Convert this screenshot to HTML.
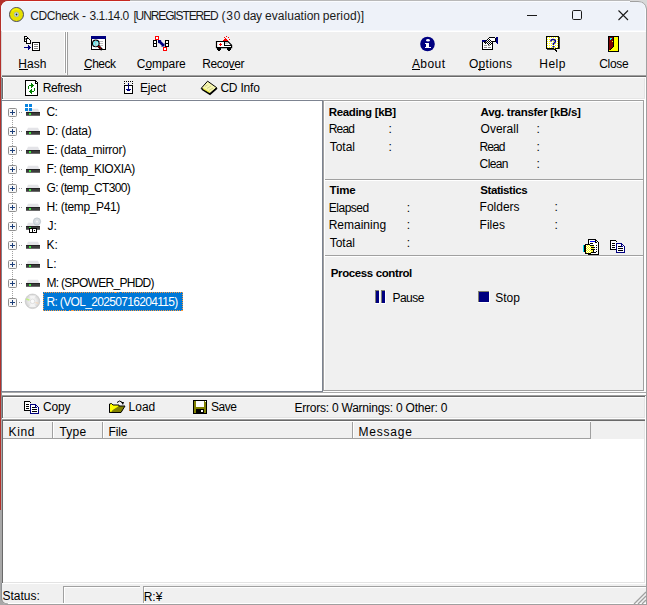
<!DOCTYPE html>
<html><head><meta charset="utf-8"><style>
html,body{margin:0;padding:0;}
body{width:647px;height:605px;overflow:hidden;background:#f0f0f0;}
#root{position:relative;width:647px;height:605px;overflow:hidden;}
#bg{position:absolute;left:0;top:0;}
#ic{position:absolute;left:0;top:0;z-index:3;}
.t{position:absolute;z-index:2;font-family:'Liberation Sans',sans-serif;font-size:12px;line-height:14px;white-space:nowrap;color:#000;}

</style></head><body>
<div id="root">
<svg id="bg" width="647" height="605" viewBox="0 0 647 605" shape-rendering="crispEdges">
<!-- outside background -->
<rect x="0" y="0" width="647" height="605" fill="#f0f0f0"/>
<rect x="0" y="0" width="130" height="12" fill="#c62820"/>
<rect x="0" y="0" width="12" height="510" fill="#b3302a"/><rect x="0" y="510" width="12" height="95" fill="#a8a8a8"/>
<rect x="130" y="0" width="517" height="1" fill="#b9b9b9"/>
<rect x="630" y="0" width="17" height="12" fill="#d8d8d8"/><rect x="130" y="0" width="500" height="1" fill="#b9b9b9"/>
<!-- window -->
<path shape-rendering="geometricPrecision" d="M1,9 Q1,1 9,1 L638,1 Q646,1 646,9 L646,606 L1,606 Z" fill="#f0f0f0" stroke="none"/>
<!-- title bar -->
<path shape-rendering="geometricPrecision" d="M1.5,9 Q1.5,1.5 9,1.5 L638,1.5 Q645.5,1.5 645.5,9 L645.5,31 L1.5,31 Z" fill="#eef2f9" stroke="#fafcff" stroke-width="1"/>
<rect x="1" y="9" width="1" height="597" fill="#8e9296"/>
<rect x="1" y="9" width="1" height="22" fill="#f4f6fa"/>
<rect x="1" y="31" width="1" height="46" fill="#d8d8d8"/>
<rect x="646" y="9" width="1" height="597" fill="#a0a0a0"/>
<path shape-rendering="geometricPrecision" d="M630,1.5 L638,1.5 Q645.5,1.5 646.5,9" stroke="#a0a0a0" stroke-width="1" fill="none"/>
<!-- toolbar 1 -->
<rect x="2" y="31" width="644" height="44" fill="#f0f0f0"/>
<rect x="2" y="30" width="644" height="1" fill="#f6f8fc"/>
<rect x="2" y="31" width="644" height="1" fill="#ffffff"/>
<rect x="64" y="32" width="1" height="41" fill="#ffffff"/>
<rect x="65" y="32" width="1" height="41" fill="#a0a0a0"/>
<rect x="66" y="32" width="1" height="43" fill="#ffffff"/>
<rect x="67" y="32" width="1" height="43" fill="#a0a0a0"/>
<rect x="2" y="75" width="644" height="1" fill="#a0a0a0"/>
<rect x="2" y="76" width="644" height="1" fill="#696969"/>
<rect x="2" y="77" width="644" height="1" fill="#ffffff"/>
<!-- toolbar 2 -->
<rect x="2" y="78" width="1" height="21" fill="#696969"/>
<rect x="3" y="78" width="1" height="20" fill="#ffffff"/>
<rect x="644" y="78" width="1" height="21" fill="#e3e3e3"/>
<rect x="645" y="77" width="1" height="22" fill="#ffffff"/>
<rect x="3" y="98" width="642" height="1" fill="#e6e6e6"/>
<rect x="2" y="99" width="644" height="1" fill="#ffffff"/>
<!-- tree -->
<rect x="1" y="100" width="322" height="292" fill="#7d8491"/>
<rect x="2" y="101" width="320" height="290" fill="#ffffff"/>
<!-- right panel (etched) -->
<rect x="323" y="100" width="322" height="292" fill="#ffffff"/>
<rect x="323" y="100" width="321" height="291" fill="#a0a0a0"/>
<rect x="324" y="101" width="319" height="289" fill="#ffffff"/>
<rect x="325" y="102" width="318" height="288" fill="#f0f0f0"/>
<rect x="644" y="100" width="2" height="292" fill="#ffffff"/>
<!-- group separators -->
<rect x="325" y="179" width="318" height="1" fill="#a0a0a0"/>
<rect x="325" y="180" width="318" height="1" fill="#ffffff"/>
<rect x="325" y="255" width="318" height="1" fill="#a0a0a0"/>
<rect x="325" y="256" width="318" height="1" fill="#ffffff"/>
<!-- splitter -->
<rect x="2" y="392" width="644" height="1" fill="#a8a8a8"/>
<rect x="2" y="393" width="644" height="2" fill="#ffffff"/>
<rect x="2" y="395" width="644" height="1" fill="#a0a0a0"/>
<rect x="2" y="396" width="643" height="1" fill="#696969"/>
<!-- bottom toolbar -->
<rect x="2" y="396" width="1" height="25" fill="#696969"/>
<rect x="3" y="397" width="642" height="1" fill="#ffffff"/>
<rect x="3" y="397" width="1" height="20" fill="#ffffff"/>
<rect x="644" y="397" width="1" height="21" fill="#e3e3e3"/>
<rect x="645" y="396" width="1" height="23" fill="#ffffff"/>
<rect x="3" y="417" width="642" height="1" fill="#e3e3e3"/>
<rect x="2" y="418" width="644" height="1" fill="#ffffff"/>
<rect x="2" y="419" width="644" height="1" fill="#a0a0a0"/>
<rect x="2" y="420" width="643" height="1" fill="#696969"/>
<!-- list view -->
<rect x="1" y="419" width="1" height="164" fill="#a8a8a8"/>
<rect x="2" y="420" width="1" height="163" fill="#696969"/>
<rect x="3" y="421" width="642" height="161" fill="#ffffff"/>
<rect x="644" y="421" width="1" height="162" fill="#e3e3e3"/>
<rect x="645" y="419" width="1" height="164" fill="#ffffff"/>
<rect x="3" y="421" width="641" height="18" fill="#f0f0f0"/>
<rect x="3" y="421" width="588" height="1" fill="#ffffff"/>
<rect x="3" y="438" width="588" height="1" fill="#a0a0a0"/>
<rect x="52" y="422" width="1" height="16" fill="#a0a0a0"/>
<rect x="53" y="422" width="1" height="16" fill="#ffffff"/>
<rect x="102" y="422" width="1" height="16" fill="#a0a0a0"/>
<rect x="103" y="422" width="1" height="16" fill="#ffffff"/>
<rect x="352" y="422" width="1" height="16" fill="#a0a0a0"/>
<rect x="353" y="422" width="1" height="16" fill="#ffffff"/>
<rect x="590" y="422" width="1" height="17" fill="#a0a0a0"/>
<rect x="3" y="582" width="642" height="1" fill="#e3e3e3"/>
<rect x="2" y="583" width="644" height="1" fill="#ffffff"/>
<!-- status bar -->
<rect x="63" y="586" width="77" height="1" fill="#a0a0a0"/>
<rect x="63" y="586" width="1" height="17" fill="#a0a0a0"/>
<rect x="64" y="587" width="76" height="1" fill="#ffffff"/>
<rect x="64" y="587" width="1" height="16" fill="#ffffff"/>
<rect x="143" y="586" width="503" height="1" fill="#a0a0a0"/>
<rect x="143" y="586" width="1" height="17" fill="#a0a0a0"/>
<rect x="144" y="587" width="502" height="1" fill="#ffffff"/>
<rect x="144" y="587" width="1" height="16" fill="#ffffff"/>
<rect x="2" y="603" width="644" height="1" fill="#ffffff"/>
<rect x="2" y="604" width="645" height="1" fill="#a0a0a0"/>
<!-- bottom-left corner -->
<path shape-rendering="geometricPrecision" d="M0,597 L1.5,597 Q1.5,604.5 8,604.5 L8,605 L0,605 Z" fill="#a8a8a8"/>
<path shape-rendering="geometricPrecision" d="M1.5,597 Q1.5,604 8,604" stroke="#909090" stroke-width="1" fill="none"/>
<!-- tree selection -->
<rect x="43" y="292" width="140" height="19" fill="#0078d7"/>
<rect x="43.5" y="292.5" width="139" height="18" fill="none" stroke="#ff9a3c" stroke-width="1" stroke-dasharray="1 1" shape-rendering="crispEdges"/>
<!-- accelerator underlines -->
<rect x="19" y="69" width="9" height="1" fill="#000"/>
<rect x="84" y="69" width="7" height="1" fill="#000"/>
<rect x="145" y="69" width="6" height="1" fill="#000"/>
<rect x="230" y="69" width="5" height="1" fill="#000"/>
<rect x="412" y="69" width="8" height="1" fill="#000"/>
<rect x="478" y="69" width="7" height="1" fill="#000"/>
</svg>

<svg id="ic" width="647" height="605" viewBox="0 0 647 605">
<defs>
<pattern id="ydots" x="0" y="0" width="2" height="2" patternUnits="userSpaceOnUse"><rect width="2" height="2" fill="#fff"/><rect x="1" y="1" width="1" height="1" fill="#ffff00"/></pattern>
<pattern id="ychk" x="0" y="0" width="2" height="2" patternUnits="userSpaceOnUse"><rect width="2" height="2" fill="#fff"/><rect x="0" y="0" width="1" height="1" fill="#ffff00"/><rect x="1" y="1" width="1" height="1" fill="#ffff00"/></pattern>
<pattern id="bwchk" x="0" y="0" width="2" height="2" patternUnits="userSpaceOnUse"><rect width="2" height="2" fill="#fff"/><rect x="0" y="0" width="1" height="1" fill="#000"/><rect x="1" y="1" width="1" height="1" fill="#000"/></pattern>
</defs>
<!-- app icon -->
<g>
<circle cx="16.5" cy="14.5" r="7" fill="#e6e000" stroke="#4a4a5a" stroke-width="1"/>
<path d="M12,11 A5.5,5.5 0 0 1 19,10" stroke="#f8f400" stroke-width="1.5" fill="none"/>
<circle cx="16.5" cy="14.5" r="2.3" fill="#c8dcea" stroke="#9ab" stroke-width="0.6"/>
<circle cx="16.5" cy="14.5" r="0.9" fill="#222"/>
</g>
<!-- caption buttons -->
<rect x="527" y="15" width="10" height="1" fill="#1a1a1a" shape-rendering="crispEdges"/>
<rect x="572.5" y="10.5" width="9" height="9" rx="1.2" fill="none" stroke="#1a1a1a" stroke-width="1"/>
<path d="M618.5,10.5 L628,20 M628,10.5 L618.5,20" stroke="#1a1a1a" stroke-width="1.1"/>

<g shape-rendering="crispEdges">
<!-- Hash icon -->
<rect x="24" y="36" width="5" height="6" fill="#000"/>
<rect x="25" y="37" width="2" height="4" fill="#fff"/>
<rect x="27" y="38" width="1" height="3" fill="#fff"/>
<rect x="27" y="36" width="2" height="1" fill="#f0f0f0"/><rect x="28" y="37" width="1" height="1" fill="#f0f0f0"/>
<rect x="26" y="38" width="5" height="6" fill="#000"/>
<rect x="27" y="39" width="2" height="4" fill="#fff"/>
<rect x="29" y="40" width="1" height="3" fill="#fff"/>
<rect x="29" y="38" width="2" height="1" fill="#f0f0f0"/><rect x="30" y="39" width="1" height="1" fill="#f0f0f0"/>
<rect x="25" y="38" width="1" height="2" fill="#808080"/>
<rect x="32" y="42" width="8" height="9" fill="#000"/><rect x="33" y="43" width="6" height="7" fill="#fff"/>
<rect x="34" y="44" width="4" height="1" fill="#808080"/><rect x="34" y="46" width="4" height="1" fill="#808080"/><rect x="34" y="48" width="4" height="1" fill="#808080"/>
<rect x="24" y="47" width="6" height="1" fill="#000080"/>
<rect x="28" y="45" width="1" height="5" fill="#000080"/><rect x="29" y="46" width="1" height="3" fill="#000080"/><rect x="30" y="47" width="1" height="1" fill="#000080"/>

<!-- Check icon -->
<rect x="91" y="36" width="15" height="14" fill="#000"/>
<rect x="91" y="36" width="15" height="3" fill="#000080"/>
<rect x="92" y="39" width="13" height="10" fill="#fff"/>
<rect x="99" y="41" width="4" height="1" fill="#c0c0c0"/><rect x="99" y="43" width="4" height="1" fill="#c0c0c0"/><rect x="99" y="45" width="4" height="1" fill="#c0c0c0"/>
</g>
<circle cx="95.8" cy="43.4" r="3.3" fill="#9ff4f6" stroke="#000" stroke-width="1.1"/>
<path d="M94,42 L95,42 M93.5,44 L94.5,44 M96.5,41.5 L97.5,41.5" stroke="#00e0f0" stroke-width="1"/>
<path d="M95.8,40.3 L95.8,46.5" stroke="#b0b0b0" stroke-width="0.9"/>
<path d="M98.2,45.8 L102,49.8" stroke="#000" stroke-width="2.4"/>
<path d="M98.6,46.2 L101.4,49.2" stroke="#ff0000" stroke-width="1.1" stroke-dasharray="1.1 0.9"/>

<g shape-rendering="crispEdges">
<!-- Compare icon -->
<rect x="153" y="40" width="4" height="7" fill="#000"/><rect x="154" y="41" width="2" height="2" fill="#fff"/><rect x="154" y="44" width="2" height="2" fill="#fff"/>
<rect x="165" y="40" width="4" height="7" fill="#000"/><rect x="166" y="41" width="2" height="2" fill="#fff"/><rect x="166" y="44" width="2" height="2" fill="#fff"/>
<rect x="155" y="36" width="4" height="4" fill="#ff0000"/><rect x="156" y="37" width="2" height="2" fill="#fff"/>
<rect x="163" y="47" width="4" height="4" fill="#ff0000"/><rect x="164" y="48" width="2" height="2" fill="#fff"/>
</g>
<path d="M159,41 L163.5,45.5" stroke="#000080" stroke-width="2.6"/>
<path d="M158,40 L161.5,40 L158,43.5 Z M164.5,46.5 L161,46.5 L164.5,43 Z" fill="#000080"/>

<!-- Recover (ambulance) -->
<path d="M216.5,41.5 L228,41.5 L231.6,45.2 L231.6,47.6 L216.5,47.6 Z" fill="#fff" stroke="#000" stroke-width="1.2"/>
<g shape-rendering="crispEdges">
<rect x="224" y="42" width="1" height="3" fill="#000"/>
<rect x="225" y="42" width="3" height="2" fill="#c8c8c8"/>
<rect x="224" y="45" width="8" height="1" fill="#000"/>
<rect x="217" y="48" width="4" height="2" fill="#000"/><rect x="227" y="48" width="4" height="2" fill="#000"/>
<rect x="218" y="50" width="2" height="1" fill="#000"/><rect x="228" y="50" width="2" height="1" fill="#000"/>
<rect x="220" y="43" width="1" height="3" fill="#ff0000"/><rect x="219" y="44" width="3" height="1" fill="#ff0000"/>
<rect x="224" y="39" width="3" height="2" fill="#ff0000"/><rect x="225" y="38" width="1" height="1" fill="#ff0000"/>
<rect x="223" y="40" width="1" height="1" fill="#ff0000"/><rect x="227" y="40" width="1" height="1" fill="#ff0000"/>
<rect x="224" y="37" width="1" height="1" fill="#ff0000"/><rect x="226" y="36" width="1" height="1" fill="#ff0000"/><rect x="228" y="37" width="1" height="1" fill="#ff0000"/><rect x="229" y="39" width="1" height="1" fill="#ff0000"/>
</g>

<!-- About icon -->
<circle cx="427.5" cy="44" r="7.3" fill="#000080"/>
<ellipse cx="428" cy="40.3" rx="1.9" ry="1.3" fill="#fff"/>
<g shape-rendering="crispEdges">
<rect x="425" y="43" width="4" height="1" fill="#fff"/>
<rect x="426" y="43" width="3" height="4" fill="#fff"/>
<rect x="425" y="47" width="6" height="1" fill="#fff"/>
</g>

<!-- Options icon -->
<g shape-rendering="crispEdges">
<rect x="482" y="40" width="11" height="10" fill="#000"/>
<rect x="483" y="41" width="9" height="8" fill="#fff"/>
<rect x="482" y="40" width="4" height="2" fill="#000080"/>
<rect x="484" y="45" width="3" height="1" fill="#909090"/><rect x="488" y="45" width="3" height="1" fill="#909090"/>
<rect x="484" y="47" width="3" height="1" fill="#909090"/><rect x="488" y="47" width="3" height="1" fill="#909090"/>
<rect x="489" y="37" width="6" height="1" fill="#000"/>
<rect x="490" y="38" width="5" height="3" fill="#fff"/>
<rect x="495" y="38" width="1" height="4" fill="#000"/>
<rect x="491" y="41" width="4" height="1" fill="#000"/>
<rect x="496" y="37" width="2" height="6" fill="#000080"/>
<rect x="497" y="43" width="1" height="1" fill="#000080"/>
</g>
<path d="M484,43 L489,37 L492.5,43.5 L490.5,45.5 Z" fill="url(#bwchk)" shape-rendering="crispEdges"/>
<path d="M484.5,41.5 Q485.5,43.8 487,42" stroke="#000" stroke-width="1" fill="none"/>

<!-- Help icon -->
<g shape-rendering="crispEdges">
<rect x="546" y="36" width="13" height="13" fill="#000"/>
<rect x="547" y="37" width="11" height="11" fill="url(#ydots)"/>
<rect x="559" y="37" width="1" height="12" fill="#404040"/>
<rect x="547" y="49" width="7" height="1" fill="#404040"/>
<rect x="554" y="49" width="2" height="1" fill="#000"/><rect x="555" y="50" width="2" height="1" fill="#000"/><rect x="556" y="51" width="1" height="1" fill="#000"/>
<rect x="554" y="48" width="1" height="1" fill="#ffff00"/>
</g>
<path d="M550.8,41.6 Q550.8,39.4 553,39.4 Q555.4,39.4 555.4,41.2 Q555.4,42.6 553.4,43.6 L553.4,45" stroke="#000080" stroke-width="1.5" fill="none"/>
<rect x="552.5" y="46" width="2" height="1.5" fill="#000080"/>

<!-- Close (door) icon -->
<g shape-rendering="crispEdges">
<rect x="608" y="36" width="11" height="16" fill="#000"/>
<rect x="609" y="37" width="9" height="14" fill="#ffff00"/>
<rect x="609" y="37" width="4" height="10" fill="#800000"/>
<rect x="609" y="47" width="3" height="1" fill="#800000"/><rect x="609" y="48" width="2" height="1" fill="#800000"/><rect x="609" y="49" width="1" height="1" fill="#800000"/><rect x="612" y="47" width="1" height="1" fill="#000"/><rect x="611" y="48" width="1" height="1" fill="#000"/><rect x="610" y="49" width="1" height="1" fill="#000"/>
<rect x="613" y="37" width="1" height="10" fill="#000"/>
<rect x="610" y="38" width="2" height="1" fill="#00ffff"/><rect x="610" y="39" width="1" height="1" fill="#00ffff"/>
<rect x="612" y="41" width="1" height="1" fill="#ffff00"/>
</g>

<!-- Refresh icon -->
<g shape-rendering="crispEdges">
<rect x="25" y="80" width="11" height="1" fill="#000"/>
<rect x="25" y="80" width="1" height="16" fill="#000"/>
<rect x="25" y="95" width="13" height="1" fill="#000"/>
<rect x="37" y="83" width="1" height="13" fill="#000"/>
<rect x="26" y="81" width="9" height="14" fill="#fff"/>
<rect x="26" y="83" width="11" height="12" fill="#fff"/>
<rect x="35" y="81" width="1" height="2" fill="#000"/>
<rect x="35" y="83" width="2" height="1" fill="#000"/>
<rect x="36" y="81" width="1" height="1" fill="#000"/>
<rect x="37" y="82" width="1" height="1" fill="#000"/>
<rect x="36" y="82" width="1" height="1" fill="#fff"/>
</g>
<g shape-rendering="crispEdges" fill="#008000">
<rect x="28" y="86" width="1" height="3"/>
<rect x="29" y="85" width="3" height="1"/>
<rect x="31" y="83" width="1" height="5"/><rect x="32" y="84" width="1" height="3"/><rect x="33" y="85" width="1" height="1"/>
<rect x="34" y="88" width="1" height="3"/>
<rect x="31" y="91" width="3" height="1"/>
<rect x="31" y="89" width="1" height="5"/><rect x="30" y="90" width="1" height="3"/><rect x="29" y="91" width="1" height="1"/>
</g>

<!-- Eject icon -->
<g shape-rendering="crispEdges">
<rect x="124" y="81" width="1" height="1" fill="#000"/><rect x="126" y="81" width="1" height="1" fill="#000"/><rect x="128" y="81" width="1" height="1" fill="#000"/><rect x="130" y="81" width="1" height="1" fill="#000"/><rect x="132" y="81" width="1" height="1" fill="#000"/>
<rect x="124" y="83" width="1" height="1" fill="#000"/><rect x="132" y="83" width="1" height="1" fill="#000"/>
<rect x="124" y="85" width="9" height="9" fill="#000"/>
<rect x="125" y="86" width="7" height="7" fill="#fff"/>
<rect x="128" y="83" width="1" height="8" fill="#000080"/>
<rect x="126" y="89" width="5" height="1" fill="#000080"/>
<rect x="127" y="90" width="3" height="1" fill="#000080"/>
</g>

<!-- CD Info icon -->
<path d="M201.2,88.3 L207.6,81.2 L216.6,87.6 L210,93.6 Z" fill="#f6f6b0" stroke="#000" stroke-width="1"/>
<path d="M201.8,89 L210,94.2 L217,88.2" stroke="#000" stroke-width="1.6" fill="none"/>
<path d="M203,88.6 L209.8,92.6" stroke="#e8e840" stroke-width="1.2"/>
<path d="M205,86.5 L207.5,85 M207,88.5 L211,86 M209,90.5 L213,88" stroke="#c0c080" stroke-width="0.7"/>

<!-- tree: expand boxes + dots -->
<rect x="8.5" y="108.5" width="8" height="8" rx="1" fill="#f7f7f7" stroke="#8f8f8f" stroke-width="1"/>
<g shape-rendering="crispEdges"><rect x="10" y="112" width="5" height="1" fill="#1c3f7a"/><rect x="12" y="110" width="1" height="5" fill="#1c3f7a"/></g>
<rect x="19" y="112" width="1" height="1" fill="#a0a0a0" shape-rendering="crispEdges"/>
<rect x="21" y="112" width="1" height="1" fill="#a0a0a0" shape-rendering="crispEdges"/>
<rect x="12" y="118" width="1" height="1" fill="#a0a0a0" shape-rendering="crispEdges"/>
<rect x="12" y="120" width="1" height="1" fill="#a0a0a0" shape-rendering="crispEdges"/>
<rect x="12" y="122" width="1" height="1" fill="#a0a0a0" shape-rendering="crispEdges"/>
<rect x="12" y="124" width="1" height="1" fill="#a0a0a0" shape-rendering="crispEdges"/>
<rect x="12" y="126" width="1" height="1" fill="#a0a0a0" shape-rendering="crispEdges"/>
<path d="M26.5,112 L28,108.8 L38,108.8 L39.5,112 Z" fill="#e4e4e8"/>
<rect x="26" y="112" width="14" height="4" fill="#3c3c3c" shape-rendering="crispEdges"/>
<rect x="26" y="112" width="14" height="1" fill="#222" shape-rendering="crispEdges"/>
<rect x="26" y="115" width="14" height="1" fill="#6a6a6a" shape-rendering="crispEdges"/>
<rect x="29" y="113" width="2" height="2" fill="#40e040" shape-rendering="crispEdges"/>
<rect x="25" y="104" width="3" height="3" fill="#0a84e0" shape-rendering="crispEdges"/>
<rect x="29" y="104" width="3" height="3" fill="#0a84e0" shape-rendering="crispEdges"/>
<rect x="25" y="108" width="3" height="3" fill="#0a84e0" shape-rendering="crispEdges"/>
<rect x="29" y="108" width="3" height="3" fill="#0a84e0" shape-rendering="crispEdges"/>
<rect x="8.5" y="127.5" width="8" height="8" rx="1" fill="#f7f7f7" stroke="#8f8f8f" stroke-width="1"/>
<g shape-rendering="crispEdges"><rect x="10" y="131" width="5" height="1" fill="#1c3f7a"/><rect x="12" y="129" width="1" height="5" fill="#1c3f7a"/></g>
<rect x="19" y="131" width="1" height="1" fill="#a0a0a0" shape-rendering="crispEdges"/>
<rect x="21" y="131" width="1" height="1" fill="#a0a0a0" shape-rendering="crispEdges"/>
<rect x="12" y="137" width="1" height="1" fill="#a0a0a0" shape-rendering="crispEdges"/>
<rect x="12" y="139" width="1" height="1" fill="#a0a0a0" shape-rendering="crispEdges"/>
<rect x="12" y="141" width="1" height="1" fill="#a0a0a0" shape-rendering="crispEdges"/>
<rect x="12" y="143" width="1" height="1" fill="#a0a0a0" shape-rendering="crispEdges"/>
<rect x="12" y="145" width="1" height="1" fill="#a0a0a0" shape-rendering="crispEdges"/>
<path d="M26.5,131 L28,127.8 L38,127.8 L39.5,131 Z" fill="#e4e4e8"/>
<rect x="26" y="131" width="14" height="4" fill="#3c3c3c" shape-rendering="crispEdges"/>
<rect x="26" y="131" width="14" height="1" fill="#222" shape-rendering="crispEdges"/>
<rect x="26" y="134" width="14" height="1" fill="#6a6a6a" shape-rendering="crispEdges"/>
<rect x="29" y="132" width="2" height="2" fill="#40e040" shape-rendering="crispEdges"/>
<rect x="8.5" y="146.5" width="8" height="8" rx="1" fill="#f7f7f7" stroke="#8f8f8f" stroke-width="1"/>
<g shape-rendering="crispEdges"><rect x="10" y="150" width="5" height="1" fill="#1c3f7a"/><rect x="12" y="148" width="1" height="5" fill="#1c3f7a"/></g>
<rect x="19" y="150" width="1" height="1" fill="#a0a0a0" shape-rendering="crispEdges"/>
<rect x="21" y="150" width="1" height="1" fill="#a0a0a0" shape-rendering="crispEdges"/>
<rect x="12" y="156" width="1" height="1" fill="#a0a0a0" shape-rendering="crispEdges"/>
<rect x="12" y="158" width="1" height="1" fill="#a0a0a0" shape-rendering="crispEdges"/>
<rect x="12" y="160" width="1" height="1" fill="#a0a0a0" shape-rendering="crispEdges"/>
<rect x="12" y="162" width="1" height="1" fill="#a0a0a0" shape-rendering="crispEdges"/>
<rect x="12" y="164" width="1" height="1" fill="#a0a0a0" shape-rendering="crispEdges"/>
<path d="M26.5,150 L28,146.8 L38,146.8 L39.5,150 Z" fill="#e4e4e8"/>
<rect x="26" y="150" width="14" height="4" fill="#3c3c3c" shape-rendering="crispEdges"/>
<rect x="26" y="150" width="14" height="1" fill="#222" shape-rendering="crispEdges"/>
<rect x="26" y="153" width="14" height="1" fill="#6a6a6a" shape-rendering="crispEdges"/>
<rect x="29" y="151" width="2" height="2" fill="#40e040" shape-rendering="crispEdges"/>
<rect x="8.5" y="165.5" width="8" height="8" rx="1" fill="#f7f7f7" stroke="#8f8f8f" stroke-width="1"/>
<g shape-rendering="crispEdges"><rect x="10" y="169" width="5" height="1" fill="#1c3f7a"/><rect x="12" y="167" width="1" height="5" fill="#1c3f7a"/></g>
<rect x="19" y="169" width="1" height="1" fill="#a0a0a0" shape-rendering="crispEdges"/>
<rect x="21" y="169" width="1" height="1" fill="#a0a0a0" shape-rendering="crispEdges"/>
<rect x="12" y="175" width="1" height="1" fill="#a0a0a0" shape-rendering="crispEdges"/>
<rect x="12" y="177" width="1" height="1" fill="#a0a0a0" shape-rendering="crispEdges"/>
<rect x="12" y="179" width="1" height="1" fill="#a0a0a0" shape-rendering="crispEdges"/>
<rect x="12" y="181" width="1" height="1" fill="#a0a0a0" shape-rendering="crispEdges"/>
<rect x="12" y="183" width="1" height="1" fill="#a0a0a0" shape-rendering="crispEdges"/>
<path d="M26.5,169 L28,165.8 L38,165.8 L39.5,169 Z" fill="#e4e4e8"/>
<rect x="26" y="169" width="14" height="4" fill="#3c3c3c" shape-rendering="crispEdges"/>
<rect x="26" y="169" width="14" height="1" fill="#222" shape-rendering="crispEdges"/>
<rect x="26" y="172" width="14" height="1" fill="#6a6a6a" shape-rendering="crispEdges"/>
<rect x="29" y="170" width="2" height="2" fill="#40e040" shape-rendering="crispEdges"/>
<rect x="8.5" y="184.5" width="8" height="8" rx="1" fill="#f7f7f7" stroke="#8f8f8f" stroke-width="1"/>
<g shape-rendering="crispEdges"><rect x="10" y="188" width="5" height="1" fill="#1c3f7a"/><rect x="12" y="186" width="1" height="5" fill="#1c3f7a"/></g>
<rect x="19" y="188" width="1" height="1" fill="#a0a0a0" shape-rendering="crispEdges"/>
<rect x="21" y="188" width="1" height="1" fill="#a0a0a0" shape-rendering="crispEdges"/>
<rect x="12" y="194" width="1" height="1" fill="#a0a0a0" shape-rendering="crispEdges"/>
<rect x="12" y="196" width="1" height="1" fill="#a0a0a0" shape-rendering="crispEdges"/>
<rect x="12" y="198" width="1" height="1" fill="#a0a0a0" shape-rendering="crispEdges"/>
<rect x="12" y="200" width="1" height="1" fill="#a0a0a0" shape-rendering="crispEdges"/>
<rect x="12" y="202" width="1" height="1" fill="#a0a0a0" shape-rendering="crispEdges"/>
<path d="M26.5,188 L28,184.8 L38,184.8 L39.5,188 Z" fill="#e4e4e8"/>
<rect x="26" y="188" width="14" height="4" fill="#3c3c3c" shape-rendering="crispEdges"/>
<rect x="26" y="188" width="14" height="1" fill="#222" shape-rendering="crispEdges"/>
<rect x="26" y="191" width="14" height="1" fill="#6a6a6a" shape-rendering="crispEdges"/>
<rect x="29" y="189" width="2" height="2" fill="#40e040" shape-rendering="crispEdges"/>
<rect x="8.5" y="203.5" width="8" height="8" rx="1" fill="#f7f7f7" stroke="#8f8f8f" stroke-width="1"/>
<g shape-rendering="crispEdges"><rect x="10" y="207" width="5" height="1" fill="#1c3f7a"/><rect x="12" y="205" width="1" height="5" fill="#1c3f7a"/></g>
<rect x="19" y="207" width="1" height="1" fill="#a0a0a0" shape-rendering="crispEdges"/>
<rect x="21" y="207" width="1" height="1" fill="#a0a0a0" shape-rendering="crispEdges"/>
<rect x="12" y="213" width="1" height="1" fill="#a0a0a0" shape-rendering="crispEdges"/>
<rect x="12" y="215" width="1" height="1" fill="#a0a0a0" shape-rendering="crispEdges"/>
<rect x="12" y="217" width="1" height="1" fill="#a0a0a0" shape-rendering="crispEdges"/>
<rect x="12" y="219" width="1" height="1" fill="#a0a0a0" shape-rendering="crispEdges"/>
<rect x="12" y="221" width="1" height="1" fill="#a0a0a0" shape-rendering="crispEdges"/>
<path d="M26.5,207 L28,203.8 L38,203.8 L39.5,207 Z" fill="#e4e4e8"/>
<rect x="26" y="207" width="14" height="4" fill="#3c3c3c" shape-rendering="crispEdges"/>
<rect x="26" y="207" width="14" height="1" fill="#222" shape-rendering="crispEdges"/>
<rect x="26" y="210" width="14" height="1" fill="#6a6a6a" shape-rendering="crispEdges"/>
<rect x="29" y="208" width="2" height="2" fill="#40e040" shape-rendering="crispEdges"/>
<rect x="8.5" y="222.5" width="8" height="8" rx="1" fill="#f7f7f7" stroke="#8f8f8f" stroke-width="1"/>
<g shape-rendering="crispEdges"><rect x="10" y="226" width="5" height="1" fill="#1c3f7a"/><rect x="12" y="224" width="1" height="5" fill="#1c3f7a"/></g>
<rect x="19" y="226" width="1" height="1" fill="#a0a0a0" shape-rendering="crispEdges"/>
<rect x="21" y="226" width="1" height="1" fill="#a0a0a0" shape-rendering="crispEdges"/>
<rect x="12" y="232" width="1" height="1" fill="#a0a0a0" shape-rendering="crispEdges"/>
<rect x="12" y="234" width="1" height="1" fill="#a0a0a0" shape-rendering="crispEdges"/>
<rect x="12" y="236" width="1" height="1" fill="#a0a0a0" shape-rendering="crispEdges"/>
<rect x="12" y="238" width="1" height="1" fill="#a0a0a0" shape-rendering="crispEdges"/>
<rect x="12" y="240" width="1" height="1" fill="#a0a0a0" shape-rendering="crispEdges"/>
<path d="M26.5,226 L28,222.8 L38,222.8 L39.5,226 Z" fill="#e4e4e8"/>
<rect x="26" y="226" width="14" height="4" fill="#3c3c3c" shape-rendering="crispEdges"/>
<rect x="26" y="226" width="14" height="1" fill="#222" shape-rendering="crispEdges"/>
<rect x="26" y="229" width="14" height="1" fill="#6a6a6a" shape-rendering="crispEdges"/>
<rect x="29" y="227" width="2" height="2" fill="#40e040" shape-rendering="crispEdges"/>
<circle cx="37" cy="221.5" r="3.6" fill="#d8dde2" stroke="#b8c0c8" stroke-width="0.8"/>
<circle cx="37" cy="221.5" r="1" fill="#f4f4f4"/>
<rect x="29" y="228" width="8" height="5" fill="#000" shape-rendering="crispEdges"/>
<rect x="30" y="229" width="2" height="3" fill="#fff" shape-rendering="crispEdges"/>
<rect x="33" y="229" width="3" height="3" fill="#fff" shape-rendering="crispEdges"/>
<rect x="34" y="230" width="1" height="1" fill="#000" shape-rendering="crispEdges"/>
<rect x="8.5" y="241.5" width="8" height="8" rx="1" fill="#f7f7f7" stroke="#8f8f8f" stroke-width="1"/>
<g shape-rendering="crispEdges"><rect x="10" y="245" width="5" height="1" fill="#1c3f7a"/><rect x="12" y="243" width="1" height="5" fill="#1c3f7a"/></g>
<rect x="19" y="245" width="1" height="1" fill="#a0a0a0" shape-rendering="crispEdges"/>
<rect x="21" y="245" width="1" height="1" fill="#a0a0a0" shape-rendering="crispEdges"/>
<rect x="12" y="251" width="1" height="1" fill="#a0a0a0" shape-rendering="crispEdges"/>
<rect x="12" y="253" width="1" height="1" fill="#a0a0a0" shape-rendering="crispEdges"/>
<rect x="12" y="255" width="1" height="1" fill="#a0a0a0" shape-rendering="crispEdges"/>
<rect x="12" y="257" width="1" height="1" fill="#a0a0a0" shape-rendering="crispEdges"/>
<rect x="12" y="259" width="1" height="1" fill="#a0a0a0" shape-rendering="crispEdges"/>
<path d="M26.5,245 L28,241.8 L38,241.8 L39.5,245 Z" fill="#e4e4e8"/>
<rect x="26" y="245" width="14" height="4" fill="#3c3c3c" shape-rendering="crispEdges"/>
<rect x="26" y="245" width="14" height="1" fill="#222" shape-rendering="crispEdges"/>
<rect x="26" y="248" width="14" height="1" fill="#6a6a6a" shape-rendering="crispEdges"/>
<rect x="29" y="246" width="2" height="2" fill="#40e040" shape-rendering="crispEdges"/>
<rect x="8.5" y="260.5" width="8" height="8" rx="1" fill="#f7f7f7" stroke="#8f8f8f" stroke-width="1"/>
<g shape-rendering="crispEdges"><rect x="10" y="264" width="5" height="1" fill="#1c3f7a"/><rect x="12" y="262" width="1" height="5" fill="#1c3f7a"/></g>
<rect x="19" y="264" width="1" height="1" fill="#a0a0a0" shape-rendering="crispEdges"/>
<rect x="21" y="264" width="1" height="1" fill="#a0a0a0" shape-rendering="crispEdges"/>
<rect x="12" y="270" width="1" height="1" fill="#a0a0a0" shape-rendering="crispEdges"/>
<rect x="12" y="272" width="1" height="1" fill="#a0a0a0" shape-rendering="crispEdges"/>
<rect x="12" y="274" width="1" height="1" fill="#a0a0a0" shape-rendering="crispEdges"/>
<rect x="12" y="276" width="1" height="1" fill="#a0a0a0" shape-rendering="crispEdges"/>
<rect x="12" y="278" width="1" height="1" fill="#a0a0a0" shape-rendering="crispEdges"/>
<path d="M26.5,264 L28,260.8 L38,260.8 L39.5,264 Z" fill="#e4e4e8"/>
<rect x="26" y="264" width="14" height="4" fill="#3c3c3c" shape-rendering="crispEdges"/>
<rect x="26" y="264" width="14" height="1" fill="#222" shape-rendering="crispEdges"/>
<rect x="26" y="267" width="14" height="1" fill="#6a6a6a" shape-rendering="crispEdges"/>
<rect x="29" y="265" width="2" height="2" fill="#40e040" shape-rendering="crispEdges"/>
<rect x="8.5" y="279.5" width="8" height="8" rx="1" fill="#f7f7f7" stroke="#8f8f8f" stroke-width="1"/>
<g shape-rendering="crispEdges"><rect x="10" y="283" width="5" height="1" fill="#1c3f7a"/><rect x="12" y="281" width="1" height="5" fill="#1c3f7a"/></g>
<rect x="19" y="283" width="1" height="1" fill="#a0a0a0" shape-rendering="crispEdges"/>
<rect x="21" y="283" width="1" height="1" fill="#a0a0a0" shape-rendering="crispEdges"/>
<rect x="12" y="289" width="1" height="1" fill="#a0a0a0" shape-rendering="crispEdges"/>
<rect x="12" y="291" width="1" height="1" fill="#a0a0a0" shape-rendering="crispEdges"/>
<rect x="12" y="293" width="1" height="1" fill="#a0a0a0" shape-rendering="crispEdges"/>
<rect x="12" y="295" width="1" height="1" fill="#a0a0a0" shape-rendering="crispEdges"/>
<rect x="12" y="297" width="1" height="1" fill="#a0a0a0" shape-rendering="crispEdges"/>
<path d="M26.5,283 L28,279.8 L38,279.8 L39.5,283 Z" fill="#e4e4e8"/>
<rect x="26" y="283" width="14" height="4" fill="#3c3c3c" shape-rendering="crispEdges"/>
<rect x="26" y="283" width="14" height="1" fill="#222" shape-rendering="crispEdges"/>
<rect x="26" y="286" width="14" height="1" fill="#6a6a6a" shape-rendering="crispEdges"/>
<rect x="29" y="284" width="2" height="2" fill="#40e040" shape-rendering="crispEdges"/>
<rect x="8.5" y="298.5" width="8" height="8" rx="1" fill="#f7f7f7" stroke="#8f8f8f" stroke-width="1"/>
<g shape-rendering="crispEdges"><rect x="10" y="302" width="5" height="1" fill="#1c3f7a"/><rect x="12" y="300" width="1" height="5" fill="#1c3f7a"/></g>
<rect x="19" y="302" width="1" height="1" fill="#a0a0a0" shape-rendering="crispEdges"/>
<rect x="21" y="302" width="1" height="1" fill="#a0a0a0" shape-rendering="crispEdges"/>
<defs><radialGradient id="cdg" cx="0.5" cy="0.5" r="0.5"><stop offset="0.25" stop-color="#f6f6f6"/><stop offset="0.7" stop-color="#e2e2e2"/><stop offset="1" stop-color="#cdcdcd"/></radialGradient></defs>
<circle cx="32.5" cy="301.3" r="7.3" fill="url(#cdg)" stroke="#c9c9c9" stroke-width="0.7"/>
<path d="M29,295.5 L32.5,301.3 L36,295.5 Z M29,307.1 L32.5,301.3 L36,307.1 Z" fill="#f8f8f8" opacity="0.8"/>
<path d="M26.3,299 L29.5,300.2" stroke="#c0f080" stroke-width="1.4"/>
<path d="M35.5,302.5 L38.6,303.4" stroke="#f0d8c0" stroke-width="1.2"/>
<circle cx="32.5" cy="301.3" r="2.3" fill="#fbfbfb" stroke="#d4d4d4" stroke-width="0.7"/>

<!-- stats icons -->
<g shape-rendering="crispEdges">
<rect x="588" y="239" width="8" height="1" fill="#000"/>
<rect x="588" y="239" width="1" height="16" fill="#000"/>
<rect x="588" y="254" width="11" height="1" fill="#000"/>
<rect x="598" y="242" width="1" height="13" fill="#000"/>
<rect x="589" y="240" width="7" height="14" fill="#fff"/>
<rect x="589" y="242" width="9" height="12" fill="#fff"/>
<rect x="596" y="240" width="1" height="1" fill="#000"/><rect x="597" y="241" width="1" height="1" fill="#000"/>
<rect x="595" y="240" width="1" height="2" fill="#000"/><rect x="595" y="242" width="2" height="1" fill="#000"/>
<rect x="590" y="241" width="5" height="1" fill="#0000ff"/>
<rect x="590" y="243" width="3" height="1" fill="#000"/>
<rect x="596" y="245" width="1" height="1" fill="#000"/><rect x="596" y="247" width="1" height="1" fill="#000"/><rect x="596" y="249" width="1" height="1" fill="#000"/><rect x="596" y="251" width="1" height="1" fill="#000"/>
<rect x="593" y="252" width="3" height="1" fill="#000"/>
<rect x="583" y="245" width="1" height="7" fill="#00e0f0"/>
<rect x="584" y="245" width="1" height="7" fill="#000"/>
<rect x="585" y="244" width="1" height="9" fill="#000"/>
<rect x="586" y="244" width="4" height="1" fill="#000"/>
<rect x="585" y="253" width="6" height="1" fill="#000"/>
<rect x="586" y="245" width="5" height="8" fill="url(#ychk)"/>
<rect x="590" y="245" width="4" height="1" fill="#000"/><rect x="591" y="246" width="3" height="1" fill="#f0f040"/><rect x="591" y="247" width="4" height="1" fill="#000"/>
<rect x="591" y="248" width="3" height="1" fill="#f0f040"/><rect x="591" y="249" width="4" height="1" fill="#000"/>
<rect x="591" y="250" width="2" height="2" fill="#f0f040"/><rect x="591" y="252" width="2" height="1" fill="#000"/><rect x="593" y="250" width="1" height="2" fill="#000"/>

<rect x="610" y="240" width="6" height="1" fill="#000"/>
<rect x="610" y="240" width="1" height="10" fill="#000"/>
<rect x="610" y="249" width="6" height="1" fill="#000"/>
<rect x="611" y="241" width="5" height="8" fill="#fff"/>
<rect x="616" y="241" width="1" height="1" fill="#000"/>
<rect x="612" y="243" width="3" height="1" fill="#000"/><rect x="612" y="245" width="3" height="1" fill="#000"/><rect x="612" y="247" width="3" height="1" fill="#000"/>
<rect x="616" y="243" width="6" height="1" fill="#000080"/>
<rect x="616" y="243" width="1" height="10" fill="#000080"/>
<rect x="616" y="252" width="9" height="1" fill="#000080"/>
<rect x="624" y="246" width="1" height="7" fill="#000080"/>
<rect x="617" y="244" width="5" height="8" fill="#fff"/>
<rect x="617" y="246" width="7" height="6" fill="#fff"/>
<rect x="622" y="244" width="1" height="1" fill="#000080"/><rect x="623" y="245" width="1" height="1" fill="#000080"/>
<rect x="621" y="244" width="1" height="2" fill="#000080"/><rect x="621" y="246" width="2" height="1" fill="#000080"/>
<rect x="618" y="246" width="3" height="1" fill="#000"/><rect x="618" y="248" width="5" height="1" fill="#000"/><rect x="618" y="250" width="5" height="1" fill="#000"/>
</g>

<!-- Pause / Stop -->
<g shape-rendering="crispEdges">
<rect x="375" y="290" width="5" height="14" fill="#ffffff"/>
<rect x="375" y="290" width="4" height="13" fill="#808070"/>
<rect x="376" y="291" width="3" height="12" fill="#000080"/>
<rect x="381" y="290" width="5" height="14" fill="#ffffff"/>
<rect x="381" y="290" width="4" height="13" fill="#808070"/>
<rect x="382" y="291" width="3" height="12" fill="#000080"/>
<rect x="478" y="291" width="12" height="12" fill="#ffffff"/>
<rect x="478" y="291" width="11" height="11" fill="#808070"/>
<rect x="479" y="292" width="10" height="10" fill="#000080"/>
</g>

<!-- Copy icon -->
<g shape-rendering="crispEdges">
<rect x="24" y="401" width="6" height="1" fill="#000"/>
<rect x="24" y="401" width="1" height="10" fill="#000"/>
<rect x="24" y="410" width="6" height="1" fill="#000"/>
<rect x="25" y="402" width="5" height="8" fill="#fff"/>
<rect x="30" y="402" width="1" height="1" fill="#000"/>
<rect x="26" y="404" width="3" height="1" fill="#000"/><rect x="26" y="406" width="3" height="1" fill="#000"/><rect x="26" y="408" width="3" height="1" fill="#000"/>
<rect x="30" y="404" width="6" height="1" fill="#000080"/>
<rect x="30" y="404" width="1" height="10" fill="#000080"/>
<rect x="30" y="413" width="9" height="1" fill="#000080"/>
<rect x="38" y="407" width="1" height="7" fill="#000080"/>
<rect x="31" y="405" width="5" height="8" fill="#fff"/>
<rect x="31" y="407" width="7" height="6" fill="#fff"/>
<rect x="36" y="405" width="1" height="1" fill="#000080"/><rect x="37" y="406" width="1" height="1" fill="#000080"/>
<rect x="35" y="405" width="1" height="2" fill="#000080"/><rect x="35" y="407" width="2" height="1" fill="#000080"/>
<rect x="32" y="407" width="3" height="1" fill="#000"/><rect x="32" y="409" width="5" height="1" fill="#000"/><rect x="32" y="411" width="5" height="1" fill="#000"/>
</g>

<!-- Load icon -->
<path d="M109.5,406 L109.5,412.5 L121,412.5 L125,406 L114,406 L109.5,412.5" fill="#808000" stroke="#000" stroke-width="1"/>
<path d="M109.5,412 L109.5,404 L111.5,403.5 L113,405 L119,405 L119,406" fill="#ffff00" stroke="#000" stroke-width="1"/>
<path d="M110.5,412 L114,406.5" stroke="#ffff00" stroke-width="1.3"/>
<path d="M117,402.5 Q119.5,399.5 122.5,402.5" stroke="#000" stroke-width="1" fill="none"/>
<path d="M121,402 L124,402 L123,405 Z" fill="#000"/>

<!-- Save icon -->
<g shape-rendering="crispEdges">
<rect x="193" y="400" width="14" height="14" fill="#000"/>
<rect x="194" y="401" width="12" height="12" fill="#808000"/>
<rect x="196" y="401" width="8" height="6" fill="#fff"/>
<rect x="205" y="401" width="1" height="1" fill="#fff"/>
<rect x="196" y="409" width="8" height="4" fill="#000"/>
<rect x="201" y="410" width="2" height="2" fill="#fff"/>
</g>

<!-- status grip -->
<path d="M634,604 L646,592 M638,604 L646,596 M642,604 L646,600" stroke="#a0a0a0" stroke-width="1.2"/>

</svg>
<span class="t" style="left:30.20px;top:8.70px;font-weight:normal;font-size:12px;letter-spacing:-0.433px;color:#1a1a1a">CDCheck</span>
<span class="t" style="left:81.90px;top:8.70px;font-weight:normal;font-size:12px;letter-spacing:0.000px;color:#1a1a1a">-</span>
<span class="t" style="left:89.50px;top:8.70px;font-weight:normal;font-size:12px;letter-spacing:-0.514px;color:#1a1a1a">3.1.14.0</span>
<span class="t" style="left:133.40px;top:8.70px;font-weight:normal;font-size:12px;letter-spacing:-1.117px;color:#1a1a1a">[UNREGISTERED</span>
<span class="t" style="left:221.40px;top:8.70px;font-weight:normal;font-size:12px;letter-spacing:0.900px;color:#1a1a1a">(30</span>
<span class="t" style="left:243.30px;top:8.70px;font-weight:normal;font-size:12px;letter-spacing:-0.300px;color:#1a1a1a">day</span>
<span class="t" style="left:265.10px;top:8.70px;font-weight:normal;font-size:12px;letter-spacing:0.022px;color:#1a1a1a">evaluation</span>
<span class="t" style="left:322.70px;top:8.70px;font-weight:normal;font-size:12px;letter-spacing:0.114px;color:#1a1a1a">period)]</span>
<span class="t" style="left:18.30px;top:56.90px;font-weight:normal;font-size:12px;letter-spacing:0.000px;color:#000">Hash</span>
<span class="t" style="left:84.00px;top:56.90px;font-weight:normal;font-size:12px;letter-spacing:-0.500px;color:#000">Check</span>
<span class="t" style="left:136.80px;top:56.90px;font-weight:normal;font-size:12px;letter-spacing:-0.067px;color:#000">Compare</span>
<span class="t" style="left:202.30px;top:56.90px;font-weight:normal;font-size:12px;letter-spacing:-0.433px;color:#000">Recover</span>
<span class="t" style="left:411.90px;top:56.90px;font-weight:normal;font-size:12px;letter-spacing:0.450px;color:#000">About</span>
<span class="t" style="left:469.00px;top:56.90px;font-weight:normal;font-size:12px;letter-spacing:0.267px;color:#000">Options</span>
<span class="t" style="left:539.20px;top:56.90px;font-weight:normal;font-size:12px;letter-spacing:0.533px;color:#000">Help</span>
<span class="t" style="left:599.30px;top:56.90px;font-weight:normal;font-size:12px;letter-spacing:-0.350px;color:#000">Close</span>
<span class="t" style="left:42.80px;top:81.10px;font-weight:normal;font-size:12px;letter-spacing:-0.467px;color:#000">Refresh</span>
<span class="t" style="left:140.00px;top:81.10px;font-weight:normal;font-size:12px;letter-spacing:-0.150px;color:#000">Eject</span>
<span class="t" style="left:220.40px;top:81.10px;font-weight:normal;font-size:12px;letter-spacing:-0.200px;color:#000">CD Info</span>
<span class="t" style="left:46.50px;top:105.00px;font-weight:normal;font-size:12px;letter-spacing:-0.600px;color:#000">C:</span>
<span class="t" style="left:46.50px;top:124.00px;font-weight:normal;font-size:12px;letter-spacing:-0.175px;color:#000">D: (data)</span>
<span class="t" style="left:46.50px;top:143.00px;font-weight:normal;font-size:12px;letter-spacing:-0.293px;color:#000">E: (data_mirror)</span>
<span class="t" style="left:46.50px;top:162.00px;font-weight:normal;font-size:12px;letter-spacing:-0.440px;color:#000">F: (temp_KIOXIA)</span>
<span class="t" style="left:46.50px;top:181.00px;font-weight:normal;font-size:12px;letter-spacing:-0.643px;color:#000">G: (temp_CT300)</span>
<span class="t" style="left:46.50px;top:200.00px;font-weight:normal;font-size:12px;letter-spacing:-0.350px;color:#000">H: (temp_P41)</span>
<span class="t" style="left:47.50px;top:219.00px;font-weight:normal;font-size:12px;letter-spacing:0.000px;color:#000">J:</span>
<span class="t" style="left:46.50px;top:238.00px;font-weight:normal;font-size:12px;letter-spacing:0.000px;color:#000">K:</span>
<span class="t" style="left:46.50px;top:257.00px;font-weight:normal;font-size:12px;letter-spacing:0.000px;color:#000">L:</span>
<span class="t" style="left:46.50px;top:276.00px;font-weight:normal;font-size:12px;letter-spacing:-0.707px;color:#000">M: (SPOWER_PHDD)</span>
<span class="t" style="left:46.50px;top:295.00px;font-weight:normal;font-size:12px;letter-spacing:-0.673px;color:#fff">R: (VOL_20250716204115)</span>
<span class="t" style="left:328.70px;top:104.80px;font-weight:bold;font-size:11.5px;letter-spacing:-0.327px;color:#000">Reading [kB]</span>
<span class="t" style="left:328.70px;top:121.80px;font-weight:normal;font-size:12px;letter-spacing:-0.800px;color:#000">Read</span>
<span class="t" style="left:388.50px;top:121.80px;font-weight:normal;font-size:12px;letter-spacing:0.000px;color:#000">:</span>
<span class="t" style="left:329.70px;top:139.70px;font-weight:normal;font-size:12px;letter-spacing:0.000px;color:#000">Total</span>
<span class="t" style="left:388.50px;top:139.70px;font-weight:normal;font-size:12px;letter-spacing:0.000px;color:#000">:</span>
<span class="t" style="left:480.60px;top:104.80px;font-weight:bold;font-size:11.5px;letter-spacing:-0.284px;color:#000">Avg. transfer [kB/s]</span>
<span class="t" style="left:480.60px;top:122.00px;font-weight:normal;font-size:12px;letter-spacing:0.000px;color:#000">Overall</span>
<span class="t" style="left:536.50px;top:122.00px;font-weight:normal;font-size:12px;letter-spacing:0.000px;color:#000">:</span>
<span class="t" style="left:479.60px;top:139.50px;font-weight:normal;font-size:12px;letter-spacing:-0.933px;color:#000">Read</span>
<span class="t" style="left:536.50px;top:139.50px;font-weight:normal;font-size:12px;letter-spacing:0.000px;color:#000">:</span>
<span class="t" style="left:479.60px;top:156.70px;font-weight:normal;font-size:12px;letter-spacing:-0.600px;color:#000">Clean</span>
<span class="t" style="left:536.50px;top:156.70px;font-weight:normal;font-size:12px;letter-spacing:0.000px;color:#000">:</span>
<span class="t" style="left:329.50px;top:182.70px;font-weight:bold;font-size:11.5px;letter-spacing:-0.133px;color:#000">Time</span>
<span class="t" style="left:328.70px;top:200.70px;font-weight:normal;font-size:12px;letter-spacing:-0.467px;color:#000">Elapsed</span>
<span class="t" style="left:406.70px;top:200.70px;font-weight:normal;font-size:12px;letter-spacing:0.000px;color:#000">:</span>
<span class="t" style="left:328.70px;top:217.70px;font-weight:normal;font-size:12px;letter-spacing:0.000px;color:#000">Remaining</span>
<span class="t" style="left:406.70px;top:217.70px;font-weight:normal;font-size:12px;letter-spacing:0.000px;color:#000">:</span>
<span class="t" style="left:329.70px;top:235.50px;font-weight:normal;font-size:12px;letter-spacing:0.000px;color:#000">Total</span>
<span class="t" style="left:406.70px;top:235.50px;font-weight:normal;font-size:12px;letter-spacing:0.000px;color:#000">:</span>
<span class="t" style="left:480.30px;top:182.80px;font-weight:bold;font-size:11.5px;letter-spacing:-0.422px;color:#000">Statistics</span>
<span class="t" style="left:479.60px;top:200.40px;font-weight:normal;font-size:12px;letter-spacing:0.000px;color:#000">Folders</span>
<span class="t" style="left:554.50px;top:200.40px;font-weight:normal;font-size:12px;letter-spacing:0.000px;color:#000">:</span>
<span class="t" style="left:479.60px;top:217.70px;font-weight:normal;font-size:12px;letter-spacing:0.000px;color:#000">Files</span>
<span class="t" style="left:554.50px;top:217.70px;font-weight:normal;font-size:12px;letter-spacing:0.000px;color:#000">:</span>
<span class="t" style="left:330.80px;top:265.50px;font-weight:bold;font-size:11.5px;letter-spacing:-0.386px;color:#000">Process control</span>
<span class="t" style="left:392.50px;top:290.80px;font-weight:normal;font-size:12px;letter-spacing:-0.550px;color:#000">Pause</span>
<span class="t" style="left:495.20px;top:290.80px;font-weight:normal;font-size:12px;letter-spacing:0.000px;color:#000">Stop</span>
<span class="t" style="left:43.00px;top:399.90px;font-weight:normal;font-size:12px;letter-spacing:-0.133px;color:#000">Copy</span>
<span class="t" style="left:128.60px;top:399.90px;font-weight:normal;font-size:12px;letter-spacing:0.000px;color:#000">Load</span>
<span class="t" style="left:211.00px;top:399.90px;font-weight:normal;font-size:12px;letter-spacing:-0.467px;color:#000">Save</span>
<span class="t" style="left:294.50px;top:401.10px;font-weight:normal;font-size:12px;letter-spacing:-0.234px;color:#000">Errors: 0 Warnings: 0 Other: 0</span>
<span class="t" style="left:8.50px;top:424.60px;font-weight:normal;font-size:12px;letter-spacing:0.667px;color:#000">Kind</span>
<span class="t" style="left:59.50px;top:424.60px;font-weight:normal;font-size:12px;letter-spacing:0.200px;color:#000">Type</span>
<span class="t" style="left:108.50px;top:424.60px;font-weight:normal;font-size:12px;letter-spacing:-0.133px;color:#000">File</span>
<span class="t" style="left:358.50px;top:424.60px;font-weight:normal;font-size:12px;letter-spacing:0.800px;color:#000">Message</span>
<span class="t" style="left:2.50px;top:589.30px;font-weight:normal;font-size:12px;letter-spacing:0.000px;color:#000">Status:</span>
<span class="t" style="left:143.70px;top:589.50px;font-weight:normal;font-size:12px;letter-spacing:0.000px;color:#000">R:¥</span>
</div>
</body></html>
